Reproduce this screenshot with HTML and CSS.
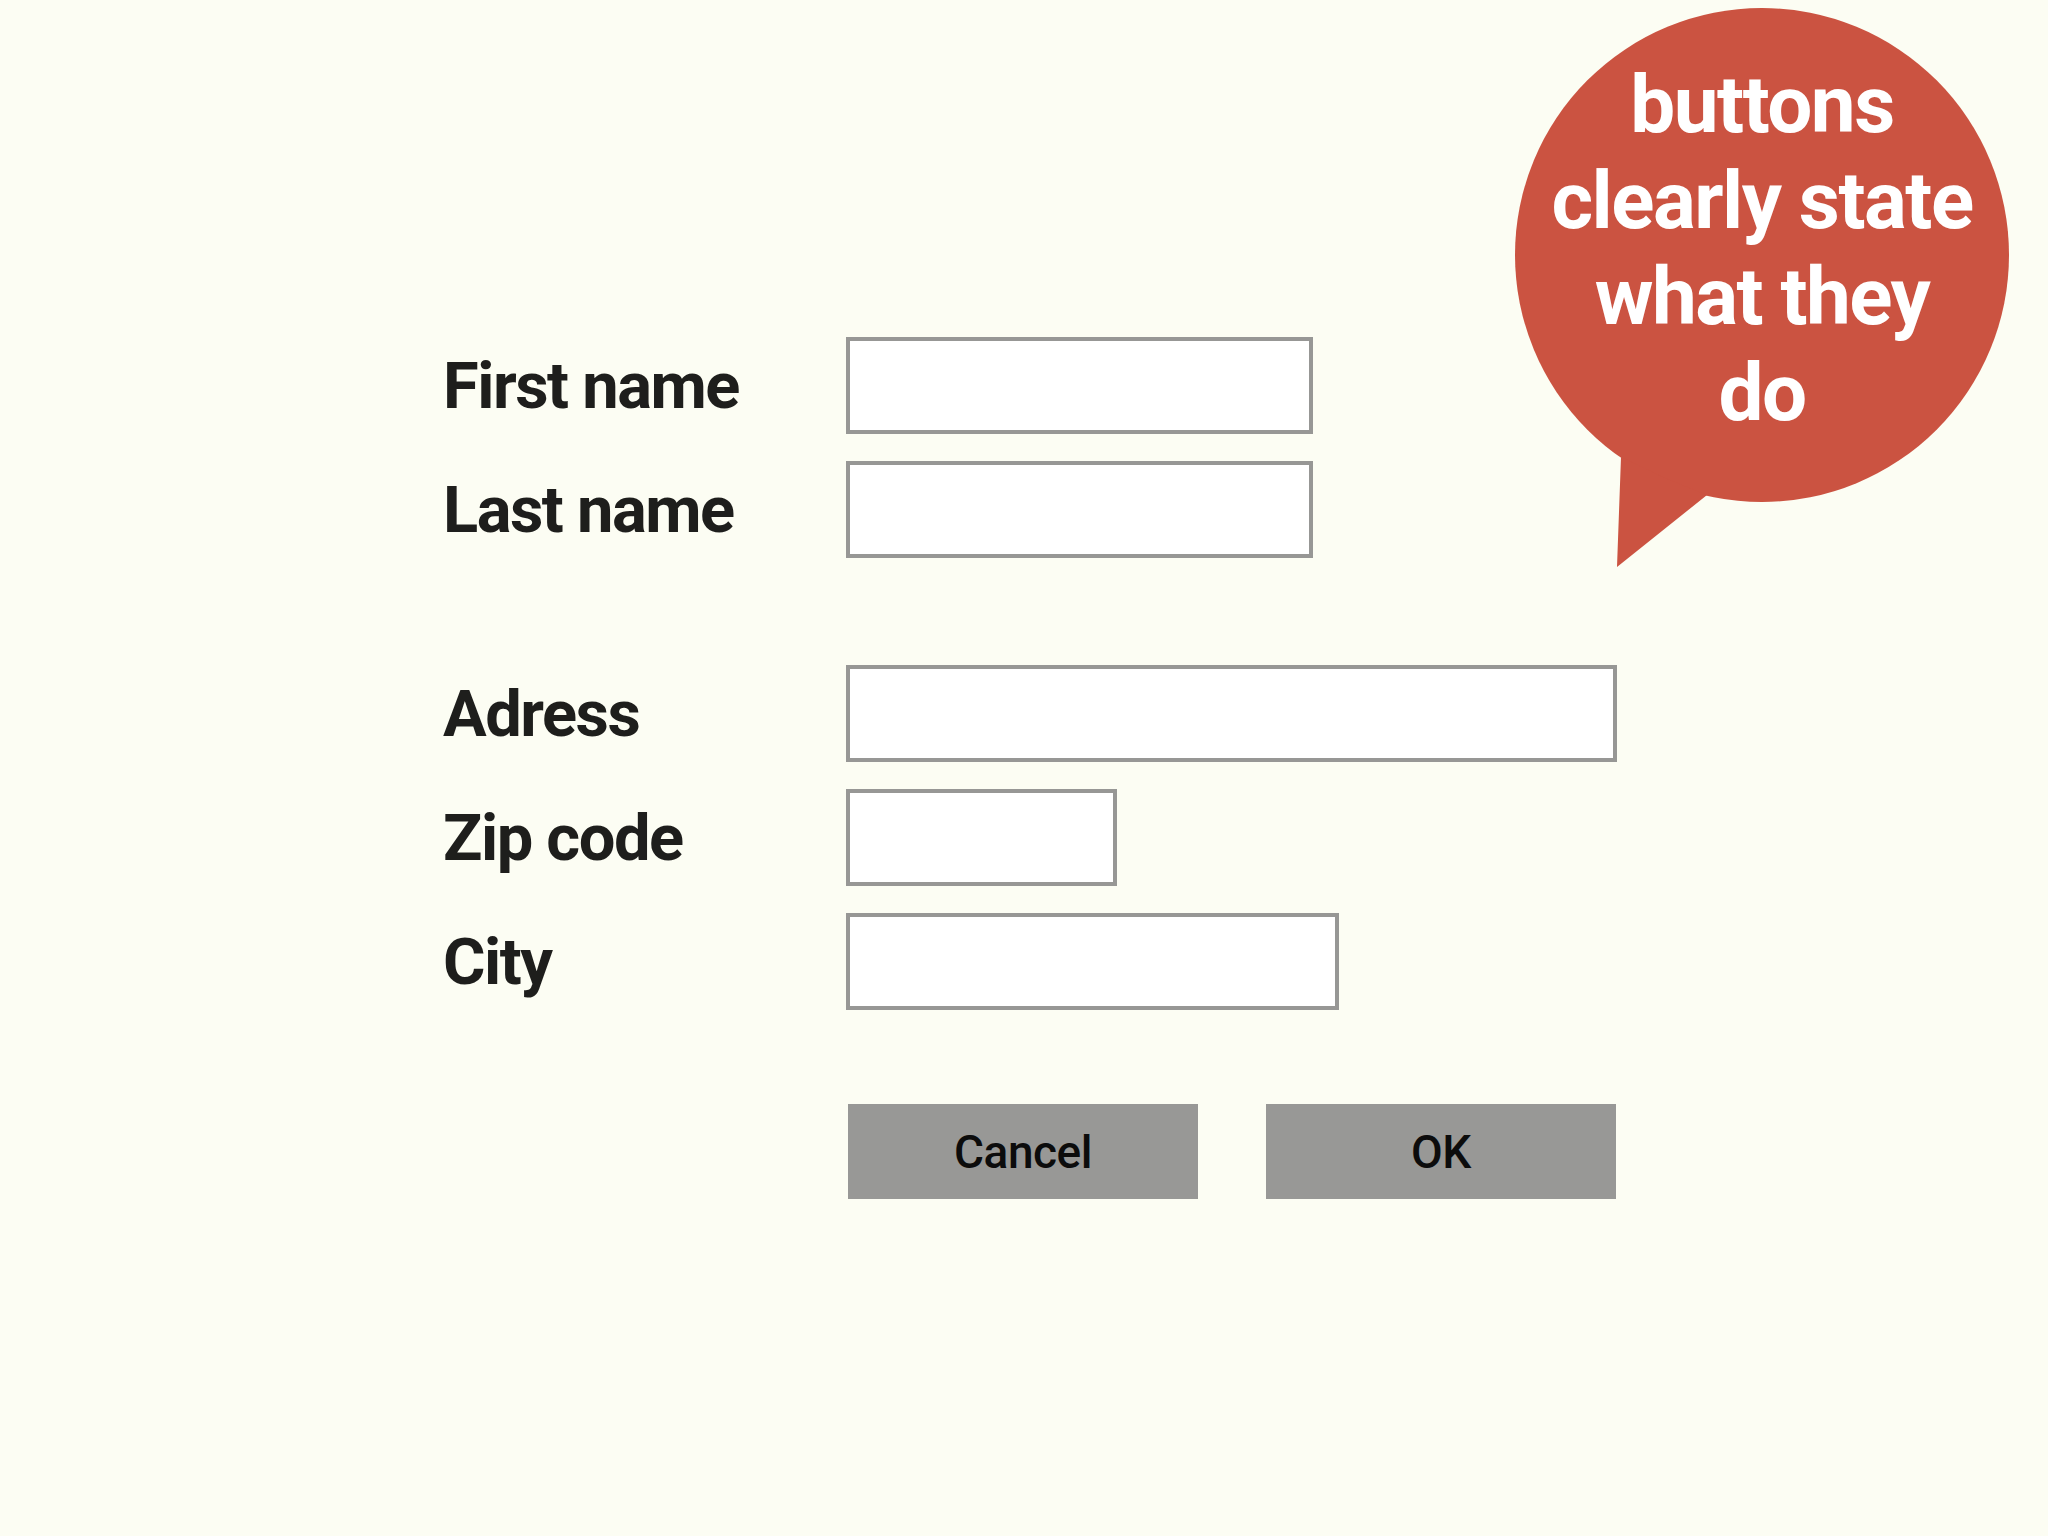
FILE: index.html
```html
<!DOCTYPE html>
<html>
<head>
    <title>Address form</title>
    <link rel="stylesheet" href="styles.css">
</head>
<body>
    <div class="form">
        <div class="group">
            <div class="row">
                <label for="first">First name</label>
                <input type="text" id="first" class="w-name">
            </div>
            <div class="row">
                <label for="last">Last name</label>
                <input type="text" id="last" class="w-name">
            </div>
        </div>

        <div class="group">
            <div class="row">
                <label for="address">Adress</label>
                <input type="text" id="address" class="w-address">
            </div>
            <div class="row">
                <label for="zip">Zip code</label>
                <input type="text" id="zip" class="w-zip">
            </div>
            <div class="row">
                <label for="city">City</label>
                <input type="text" id="city" class="w-city">
            </div>
        </div>

        <div class="actions">
            <button type="button">Cancel</button>
            <button type="submit">OK</button>
        </div>
    </div>

    <!-- callout over the top right corner -->
    <div class="bubble">
        <svg class="bubble-shape" width="494" height="560" viewBox="0 0 494 560">
            <circle cx="247" cy="247" r="247"/>
            <polygon points="106,449 102,559 192,487 150,470"/>
        </svg>
        <p class="bubble-text">buttons<br>clearly state<br>what they<br>do</p>
    </div>
</body>
</html>
```

FILE: styles.css
```css
body {
    margin: 0;
    min-height: 1536px;
    background: #fcfdf3;
    font-family: Roboto, "Liberation Sans", sans-serif;
    color: #1e1e1c;
    position: relative;
}
.form {
    padding: 337px 0 0 442px;
}
.group {
    display: flex;
    flex-direction: column;
    gap: 27px;
}
.group + .group {
    margin-top: 107px;
}
.row {
    display: grid;
    grid-template-columns: 404px auto;
    align-items: center;
}
label {
    padding-left: 1px;
    font-size: 65px;
    font-weight: 700;
    letter-spacing: -1.5px;
}
input {
    box-sizing: border-box;
    height: 97px;
    margin: 0;
    padding: 0 16px;
    background: #fff;
    border: 4px solid #979795;
    border-radius: 0;
    font-size: 40px;
}
.w-name { width: 467px; }
.w-address { width: 771px; }
.w-zip { width: 271px; }
.w-city { width: 493px; }

.actions {
    display: flex;
    gap: 68px;
    margin-top: 94px;
    padding-left: 406px;
}
button {
    width: 350px;
    height: 95px;
    background: #989896;
    color: #0c0c0c;
    border: none;
    border-radius: 0;
    font-family: Roboto, "Liberation Sans", sans-serif;
    font-size: 46px;
    font-weight: 500;
    letter-spacing: -0.5px;
    padding: 0;
}

.bubble {
    position: absolute;
    left: 1515px;
    top: 8px;
    width: 494px;
    height: 560px;
}
.bubble-shape {
    display: block;
    fill: #cb5341;
}
.bubble-text {
    position: absolute;
    left: 0;
    right: 0;
    top: 49px;
    margin: 0;
    color: #fff;
    text-align: center;
    font-size: 80px;
    font-weight: 700;
    line-height: 96px;
    letter-spacing: -1.5px;
}
```
